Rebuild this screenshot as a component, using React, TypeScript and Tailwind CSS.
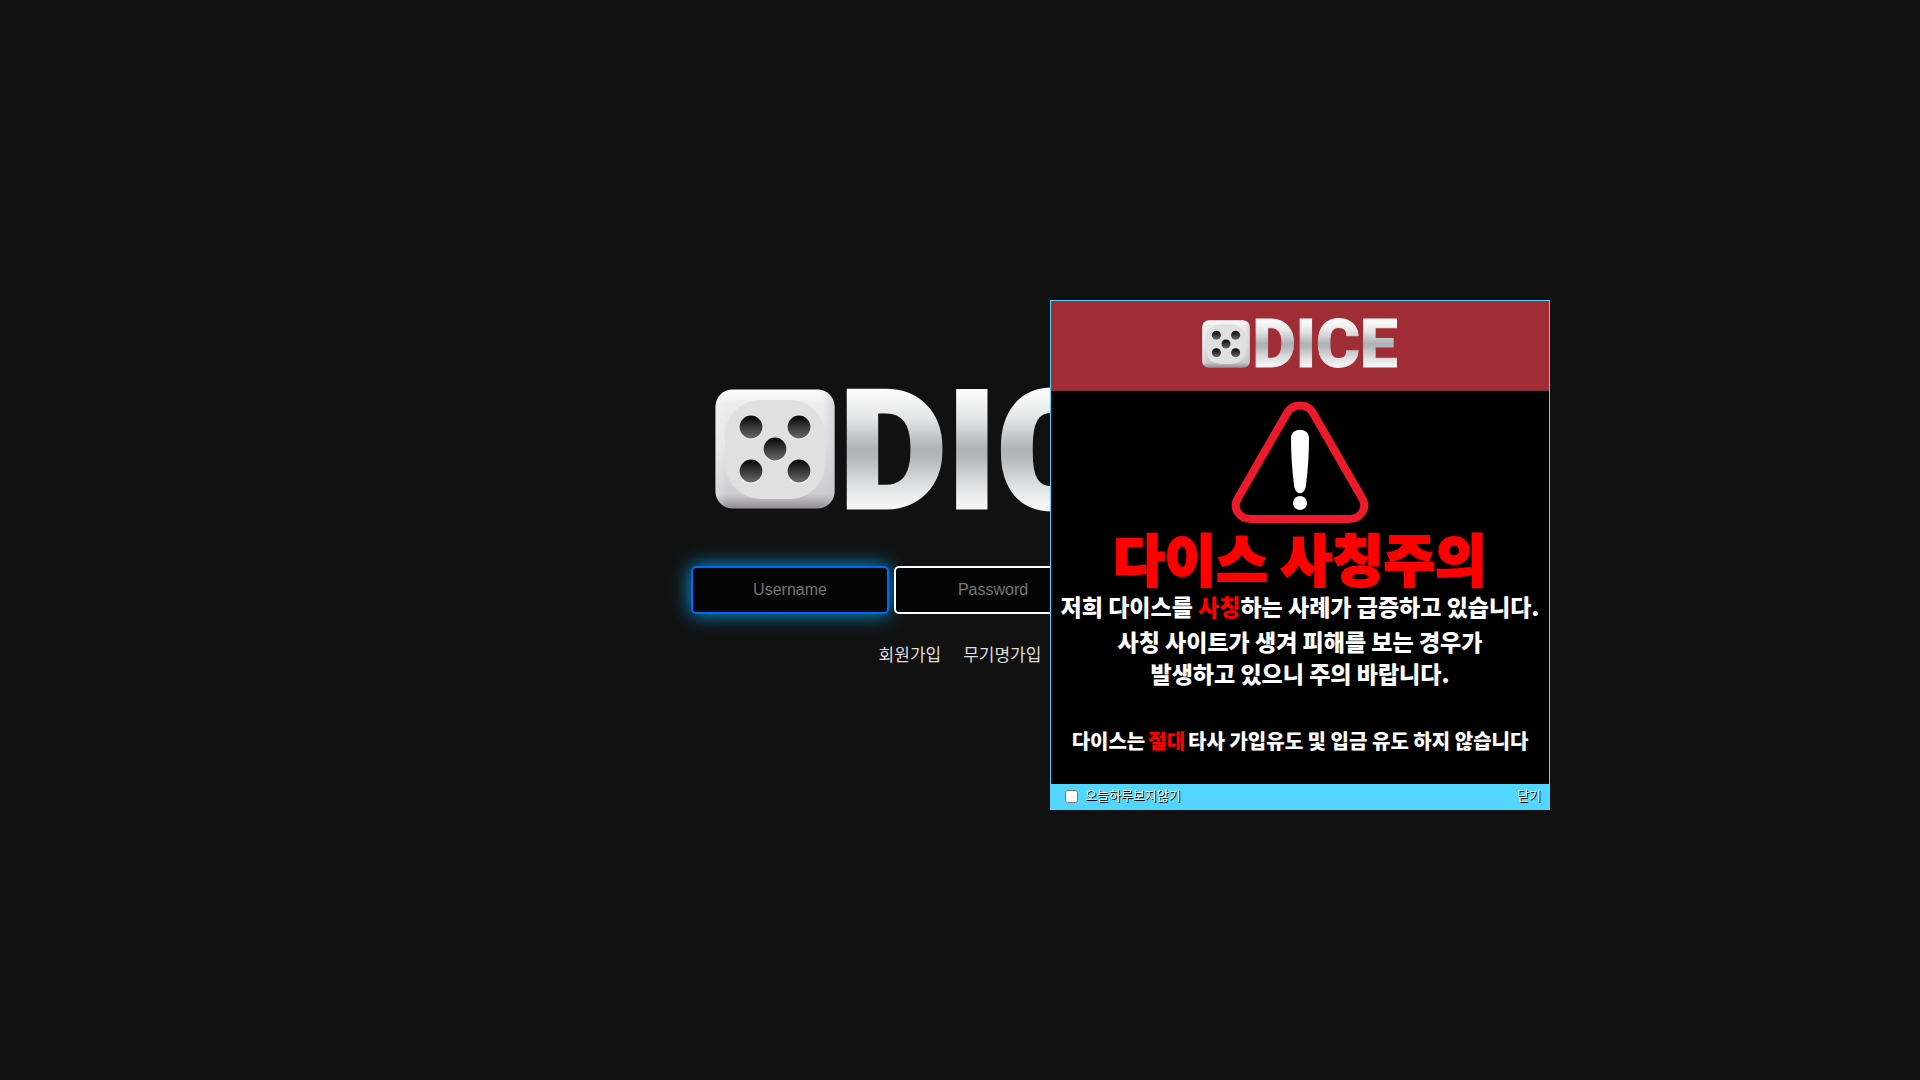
import { useState } from "react";
import { LogIn } from "lucide-react";

const pips = [
  [36, 38],
  [84, 38],
  [60, 60],
  [36, 82],
  [84, 82],
];

function Dice({ id, className }: { id: string; className: string }) {
  return (
    <svg viewBox="0 0 120 120" className={className} aria-hidden="true">
      <defs>
        <linearGradient id={`${id}-body`} x1="0" y1="0" x2="0" y2="1">
          <stop offset="0" stopColor="#fdfdfd" />
          <stop offset="0.12" stopColor="#ededed" />
          <stop offset="0.5" stopColor="#e2e2e3" />
          <stop offset="0.88" stopColor="#cdcbd0" />
          <stop offset="1" stopColor="#8f8d92" />
        </linearGradient>
        <linearGradient id={`${id}-side`} x1="0" y1="0" x2="1" y2="0">
          <stop offset="0" stopColor="#fff" stopOpacity="0.3" />
          <stop offset="0.1" stopColor="#fff" stopOpacity="0" />
          <stop offset="0.9" stopColor="#c8c6d0" stopOpacity="0" />
          <stop offset="1" stopColor="#c8c6d0" stopOpacity="0.6" />
        </linearGradient>
        <linearGradient id={`${id}-pip`} x1="0" y1="0" x2="0" y2="1">
          <stop offset="0" stopColor="#050505" />
          <stop offset="1" stopColor="#6a6a6a" />
        </linearGradient>
      </defs>
      <rect x="0.5" y="0.5" width="119" height="119" rx="17" fill={`url(#${id}-body)`} />
      <rect x="0.5" y="0.5" width="119" height="119" rx="17" fill={`url(#${id}-side)`} />
      <path
        d="M46 11H74C94 11 110 27 110 46V74C110 94 94 110 74 110H46C26 110 10 94 10 74V46C10 27 26 11 46 11Z"
        fill="#e0e0e0"
      />
      {pips.map(([x, y]) => (
        <g key={`${x}-${y}`}>
          <circle cx={x} cy={y + 1} r="11.6" fill="#f4f4f4" />
          <circle cx={x} cy={y} r="11.4" fill={`url(#${id}-pip)`} />
        </g>
      ))}
    </svg>
  );
}

const metal =
  "bg-[linear-gradient(to_bottom,#fafafa_18%,#e4e5e6_32%,#afb3b6_50%,#b4b7ba_55%,#dcdddf_70%,#f4f4f4_82%)] bg-clip-text font-[Roboto,sans-serif] font-black text-transparent";

function Login() {
  return (
    <main className="flex min-h-screen flex-col items-center bg-[#111] pt-[389px]">
      <h1 className="flex h-[120px] items-center gap-1 pr-1.5">
        <Dice id="login" className="size-[120px]" />
        <span className={`pt-1.5 text-[166px] leading-[166px] [-webkit-text-stroke:3px_transparent] ${metal}`}>DICE</span>
      </h1>
      <form className="mt-[57px] flex gap-[5px]" onSubmit={(e) => e.preventDefault()}>
        <input
          type="text"
          aria-label="Username"
          placeholder="Username"
          className="h-12 w-[198px] rounded-[5px] border-2 border-[#0066ff] bg-[#050505] text-center text-base text-white shadow-[0_0_20px_rgb(0,162,232)] outline-none placeholder:text-[#757575]"
        />
        <input
          type="password"
          aria-label="Password"
          placeholder="Password"
          className="h-12 w-[198px] rounded-[5px] border-2 border-white bg-[#050505] text-center text-base text-white outline-none placeholder:text-[#757575]"
        />
        <button
          type="submit"
          aria-label="로그인"
          className="flex h-12 w-[132px] items-center justify-center rounded-[5px] border-2 border-white bg-[#050505] text-white"
        >
          <LogIn className="size-5" />
        </button>
      </form>
      <nav className="mt-7 flex gap-[22px] font-['Noto_Sans_CJK_KR',sans-serif] text-[17px] leading-6 text-[#ddd]">
        <a href="#join">회원가입</a>
        <a href="#anonymous">무기명가입</a>
      </nav>
    </main>
  );
}

function Popup({ onClose }: { onClose: () => void }) {
  return (
    <section
      aria-label="다이스 사칭주의"
      className="absolute top-[300px] left-[1050px] w-[500px] border border-[#52d5ff] bg-black font-['Noto_Sans_CJK_KR',sans-serif]"
    >
      <header className="flex h-[90px] items-center justify-center gap-0.5 border-b border-[#7d2a30] bg-[#a02d35] pb-1">
        <Dice id="popup" className="size-12" />
        <span className={`pt-0.5 text-[67px] leading-[67px] [-webkit-text-stroke:1px_transparent] ${metal}`}>DICE</span>
      </header>
      <div className="flex h-[393px] flex-col items-center pt-[9px] font-black whitespace-nowrap text-white">
        <svg viewBox="0 0 138 124" className="h-[124px] w-[138px]" aria-hidden="true">
          <path
            d="M56 13C62 3 76 3 82 13L131 98C137 108 130 119 118 119H20C8 119 1 108 7 98Z"
            fill="none"
            stroke="#ed1a2a"
            strokeWidth="8"
          />
          <path d="M60 38C60 27 78 27 78 38C78 54 77 69 75 85C74 96 64 96 63 85C61 69 60 54 60 38Z" fill="#fff" />
          <circle cx="69" cy="103" r="7" fill="#fff" />
        </svg>
        <h2 className="text-[56px] leading-[66px] text-[#ff0000] [-webkit-text-stroke:2px_#ff0000]">다이스 사칭주의</h2>
        <div className="text-[23px] leading-8">
          <p>
            저희 다이스를 <span className="text-[#ff0000]">사칭</span>하는 사례가 급증하고 있습니다.
          </p>
          <p className="mt-[3px] text-center">사칭 사이트가 생겨 피해를 보는 경우가</p>
          <p className="text-center">발생하고 있으니 주의 바랍니다.</p>
        </div>
        <p className="mt-9 text-[20px] leading-8">
          다이스는<span className="mx-[3px] text-[#ff0000]">절대</span>타사 가입유도 및 입금 유도 하지 않습니다
        </p>
      </div>
      <footer className="flex h-[25px] items-center justify-between bg-[#52d5ff] pr-2 pl-3.5 text-[13px] leading-5 text-white">
        <label className="flex items-center gap-[7px]">
          <input type="checkbox" className="size-[13px]" />
          <span className="pb-1 [text-shadow:1px_1px_0_#000]">오늘하루보지않기</span>
        </label>
        <button type="button" onClick={onClose} className="pb-1 [text-shadow:1px_1px_0_#000]">
          닫기
        </button>
      </footer>
    </section>
  );
}

export default function App() {
  const [open, setOpen] = useState(true);

  return (
    <div className="relative font-['Liberation_Sans',Arial,sans-serif]">
      <Login />
      {open && <Popup onClose={() => setOpen(false)} />}
    </div>
  );
}
